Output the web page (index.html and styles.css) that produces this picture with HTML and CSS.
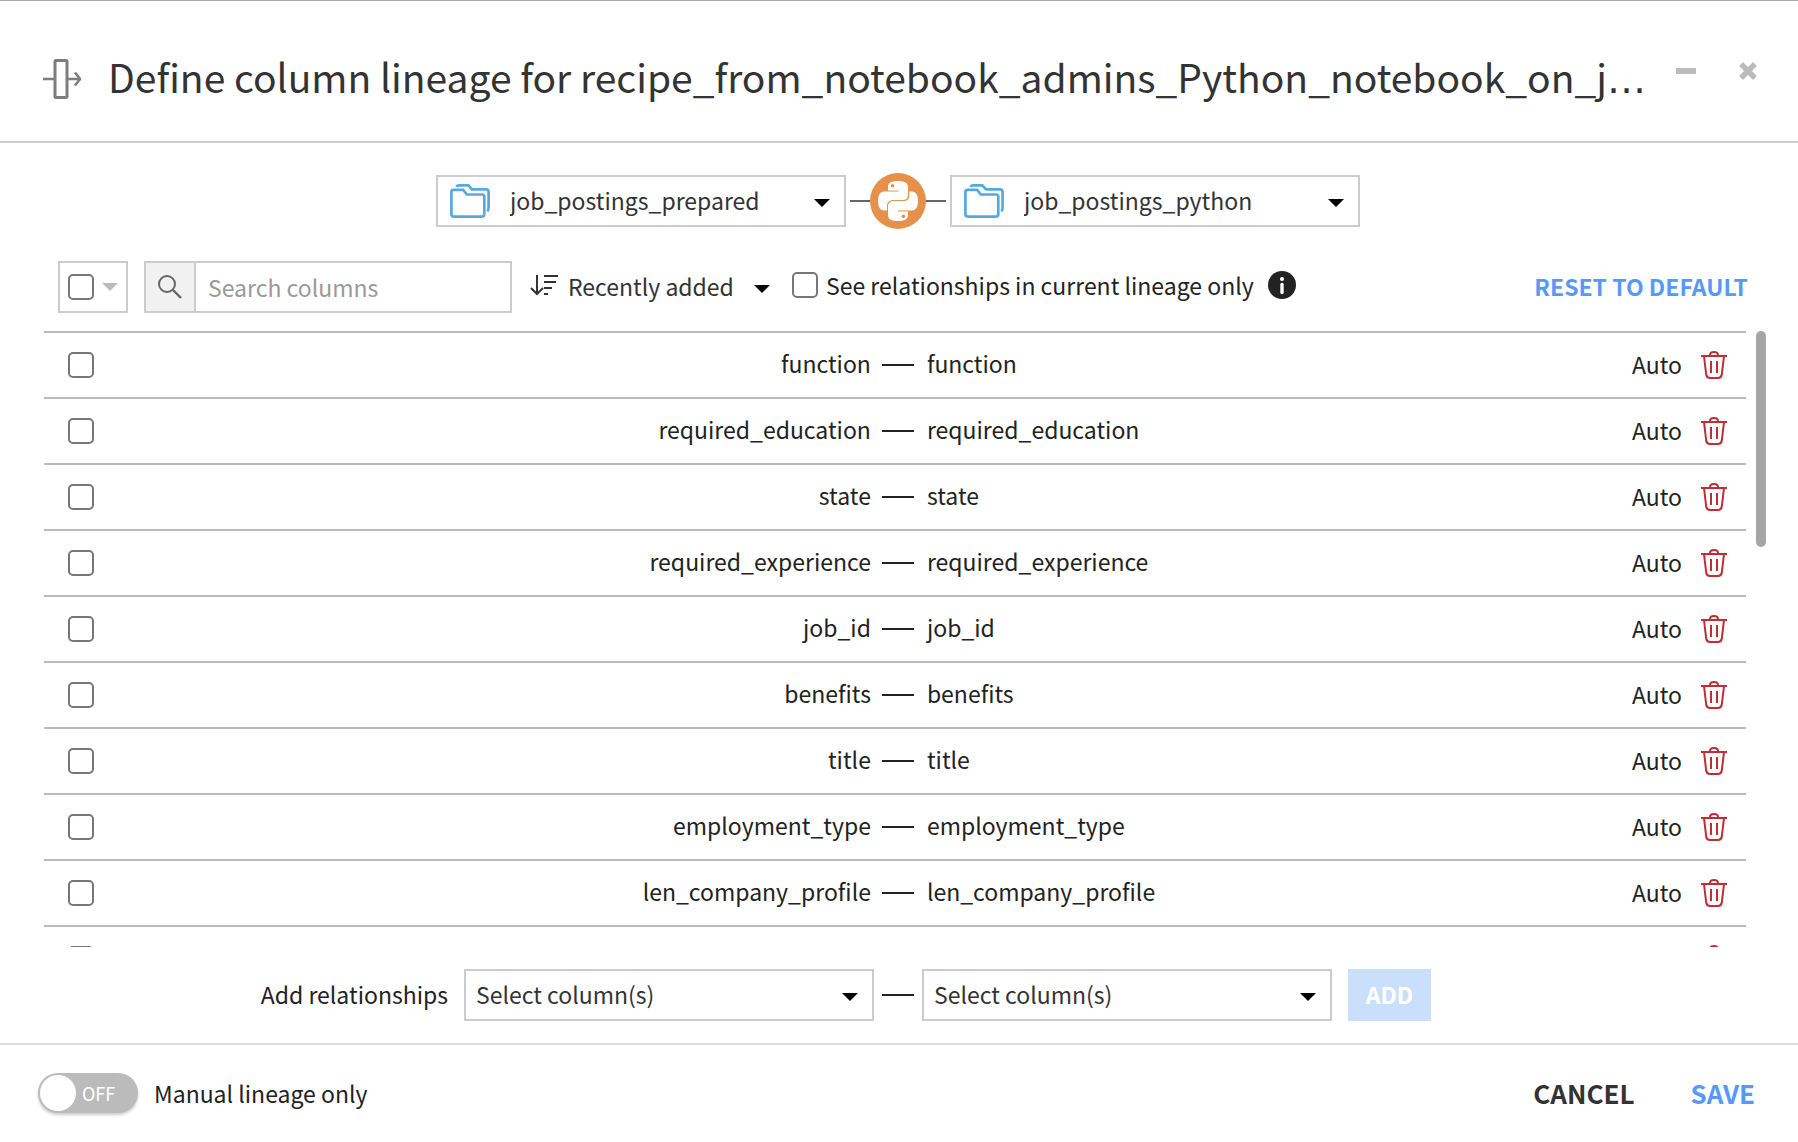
FILE: index.html
```html
<!DOCTYPE html>
<html lang="en">
<head>
<meta charset="utf-8">
<title>Define column lineage</title>
<link rel="stylesheet" href="styles.css">
</head>
<body>
<svg class="sprite" aria-hidden="true">
  <symbol id="caret" viewBox="0 0 16 8"><path d="M0 0h16L8 8z" fill="currentColor"/></symbol>
  <symbol id="folder" viewBox="0 0 40 34">
    <g fill="none" stroke="currentColor" stroke-width="2.700">
      <path d="M1.400 10V8Q1.400 5.900 3.500 5.900h9.700l3.600 4.600h15.200q2.300 0 2.300 2.300v17.300q0 2.500-2.300 2.500H3.900q-2.500 0-2.500-2.500z"/>
      <path d="M6.400 2.800Q7.200 1.400 9 1.400h9.400l3.600 4h14q2.600 0 2.600 2.600v15.800q0 2.200-1.300 3.600"/>
    </g>
  </symbol>
  <symbol id="trash" viewBox="0 0 26 28">
    <g fill="none" stroke="currentColor" stroke-width="2">
      <path d="M0 5h26M9 5V4q0-3 4-3t4 3v1M3 5l2.200 18.500Q5.700 27 9 27h8q3.300 0 3.800-3.500L23 5M10 10v12M16 10v12"/>
    </g>
  </symbol>
</svg>

<div class="dialog">
  <header class="header">
    <svg class="header-icon" viewBox="0 0 40 40" aria-hidden="true">
      <g fill="none" stroke="currentColor" stroke-width="3">
        <rect x="13" y="1.500" width="12" height="37" rx="1"/>
        <path d="M1 20h12M25 20h14" stroke-width="2.500"/>
        <path d="M33 13.500l5 6.500-5 6.500" stroke-linejoin="round" stroke-width="2.500"/>
      </g>
    </svg>
    <h1 class="title"><span class="title-text">Define column lineage for recipe_from_notebook_admins_Python_notebook_on_job_postings</span></h1>
    <div class="window-actions">
      <button class="icon-button" type="button" aria-label="Minimize">
        <svg width="20" height="20" viewBox="0 0 20 20"><path d="M0 7h20v6H0z" fill="currentColor"/></svg>
      </button>
      <button class="icon-button" type="button" aria-label="Close">
        <svg width="20" height="20" viewBox="0 0 20 20"><path d="M3 3l14 14M17 3L3 17" stroke="currentColor" stroke-width="5.500"/></svg>
      </button>
    </div>
  </header>

  <main class="main">
    <div class="datasets">
      <div class="field">
        <svg class="field-icon" width="40" height="34"><use href="#folder"/></svg>
        <select class="field-select with-icon" aria-label="Input dataset"><option>job_postings_prepared</option></select>
        <svg class="field-caret" width="16" height="8"><use href="#caret"/></svg>
      </div>
      <div class="connector">
        <svg class="python" viewBox="0 0 56 56" aria-hidden="true">
          <circle cx="28" cy="28" r="28" fill="#e6914a"/>
          <g fill="#fff">
            <path d="M27.500 8C20.500 8 18 10.500 18 14v3.500h10.500v1H14c-4 0-6 4-6 9.500s2 9.500 6 9.500h3V33c0-4 3-6 6.500-6h9.500c3 0 5-2 5-5V14c0-4-3.500-6-10.500-6z"/>
            <path d="M28.500 48C35.500 48 38 45.500 38 42v-3.500H28v-1h14c4 0 6-4 6-9.500s-2-9.500-6-9.500h-2.800v4c0 3.500-2.500 5.500-5.500 5.500h-9.700c-3.500 0-6 2-6 5.500V42c0 4 3 6 10.500 6z"/>
          </g>
          <circle cx="22.600" cy="12.800" r="1.800" fill="#e6914a"/>
          <circle cx="33.400" cy="43.200" r="1.800" fill="#e6914a"/>
        </svg>
      </div>
      <div class="field">
        <svg class="field-icon" width="40" height="34"><use href="#folder"/></svg>
        <select class="field-select with-icon" aria-label="Output dataset"><option>job_postings_python</option></select>
        <svg class="field-caret" width="16" height="8"><use href="#caret"/></svg>
      </div>
    </div>

    <div class="toolbar">
      <div class="select-all">
        <input class="checkbox" type="checkbox" aria-label="Select all">
        <svg width="16" height="8" aria-hidden="true"><use href="#caret"/></svg>
      </div>
      <div class="search">
        <label class="search-icon" for="search" aria-label="Search">
          <svg width="26" height="26" viewBox="0 0 26 26"><g fill="none" stroke="currentColor" stroke-width="2"><circle cx="10" cy="10" r="8"/><path d="M16 16l8 8" stroke-width="2.400"/></g></svg>
        </label>
        <input class="search-input" id="search" type="text" placeholder="Search columns">
      </div>
      <div class="sort">
        <svg class="sort-icon" width="28" height="22" viewBox="0 0 28 22" aria-hidden="true"><g fill="none" stroke="currentColor" stroke-width="2"><path d="M7 1v19M1 14l6 6 6-6M14 2h14M14 8h12M14 14h8M14 20h4"/></g></svg>
        <select class="sort-select" aria-label="Sort order"><option>Recently added</option></select>
        <svg class="sort-caret" width="16" height="8"><use href="#caret"/></svg>
      </div>
      <label class="only-current"><input class="checkbox" type="checkbox">See relationships in current lineage only
        <svg class="info" width="28" height="28" viewBox="0 0 28 28" aria-hidden="true"><circle cx="14" cy="14" r="14" fill="#222"/><circle cx="14" cy="8" r="2" fill="#fff"/><path d="M14 13.500v8" stroke="#fff" stroke-width="3.400" stroke-linecap="round"/></svg>
      </label>
      <button class="reset" type="button">RESET TO DEFAULT</button>
    </div>

    <div class="list">
      <div class="list-view">
        <table class="relations">
          <colgroup><col class="col-check"><col class="col-from"><col class="col-dash"><col><col class="col-mode"><col class="col-delete"></colgroup>
          <tbody id="rows"></tbody>
        </table>
      </div>
      <div class="scrollbar"><div class="thumb"></div></div>
    </div>

    <div class="add-row">
      <span class="add-label">Add relationships</span>
      <div class="add-fields">
        <div class="field">
          <select class="field-select" aria-label="Input columns"><option>Select column(s)</option></select>
          <svg class="field-caret" width="16" height="8"><use href="#caret"/></svg>
        </div>
        <span class="dash"></span>
        <div class="field">
          <select class="field-select" aria-label="Output columns"><option>Select column(s)</option></select>
          <svg class="field-caret" width="16" height="8"><use href="#caret"/></svg>
        </div>
      </div>
      <button class="add" type="button" disabled>ADD</button>
    </div>
  </main>

  <footer class="footer">
    <label class="manual">
      <input class="toggle-input" type="checkbox" role="switch">
      <span class="toggle" aria-hidden="true"><span class="knob"></span>OFF</span>
      Manual lineage only
    </label>
    <button class="text-button" type="button">CANCEL</button>
    <button class="text-button primary" type="button">SAVE</button>
  </footer>
</div>
<script src="rows.js"></script>
</body>
</html>
```
FILE: rows.js
```js
const columns = ["function", "required_education", "state", "required_experience",
  "job_id", "benefits", "title", "employment_type", "len_company_profile", ""];

document.getElementById("rows").innerHTML = columns.map(name => `
  <tr>
    <td class="cell-check"><input class="checkbox" type="checkbox" aria-label="Select row"></td>
    <td class="cell-from">${name}</td>
    <td>${name ? '<span class="dash"></span>' : ""}</td>
    <td class="cell-to">${name}</td>
    <td class="cell-mode">${name ? "Auto" : ""}</td>
    <td class="cell-delete"><button class="icon-button delete" type="button" aria-label="Delete"><svg width="26" height="28"><use href="#trash"/></svg></button></td>
  </tr>`).join("");
```
FILE: styles.css
```css
* { box-sizing: border-box; }

body {
  margin: 0;
  background: #fff;
  color: #222;
  font: 23px/32px "Noto Sans CJK KR", "Noto Sans", sans-serif;
}

button, input, select { font: inherit; color: inherit; }
button { padding: 0; border: 0; background: none; cursor: pointer; }
svg { display: block; flex: none; }
.sprite { position: absolute; width: 0; height: 0; }

.dialog {
  display: flex;
  flex-direction: column;
  height: 100vh;
  border-top: 1px solid #aaa;
}

.header {
  display: flex;
  align-items: center;
  padding: 48px 40px 32px 42px;
  border-bottom: 2px solid #ccc;
}
.header-icon { width: 40px; height: 40px; margin-right: 26px; color: #7d7d7d; }
/* The heading's own font supplies the ellipsis, with its dots on the baseline. */
.title {
  flex: 1;
  min-width: 0;
  margin: 0 0 2px;
  overflow: hidden;
  white-space: nowrap;
  text-overflow: ellipsis;
  color: #333;
  font-family: "DejaVu Sans", sans-serif;
  font-size: 39px;
  font-weight: 400;
  line-height: 54px;
}
.title-text { font-family: "Noto Sans CJK KR", "Noto Sans", sans-serif; }
.window-actions {
  display: flex;
  gap: 42px;
  margin: 0 0 16px 18px;
  color: #bbb;
}
.icon-button { display: block; color: inherit; }

.main {
  display: flex;
  flex: 1;
  flex-direction: column;
  min-height: 0;
}

.datasets {
  display: flex;
  justify-content: center;
  gap: 4px;
  padding: 32px 2px 0 0;
}
.field {
  display: grid;
  grid-template-columns: auto 1fr auto;
  align-items: center;
  width: 410px;
  height: 52px;
  border: 2px solid #ccc;
  color: #333;
}
.field > * { grid-row: 1; }
.field-icon { grid-column: 1; margin-left: 12px; color: #57a9dc; pointer-events: none; }
.field-caret { grid-column: 3; margin: 4px 14px 0 0; color: #000; pointer-events: none; }
.field-select {
  grid-column: 1 / -1;
  height: 48px;
  padding: 0 40px 2px 10px;
  appearance: none;
  border: 0;
  background: none;
}
.field-select.with-icon { padding-left: 72px; }
.connector {
  display: flex;
  align-items: center;
  width: 96px;
  height: 52px;
}
.connector::before, .connector::after { content: ""; flex: 1; height: 2px; background: #666; }
.python { width: 56px; height: 56px; }

.toolbar {
  display: flex;
  align-items: center;
  padding: 34px 50px 18px 58px;
}
.checkbox {
  flex: none;
  width: 26px;
  height: 26px;
  margin: 0;
  appearance: none;
  border: 2px solid #777;
  border-radius: 5px;
  background: #fff;
}
.select-all {
  display: flex;
  align-items: center;
  gap: 8px;
  width: 70px;
  height: 52px;
  padding-left: 8px;
  border: 2px solid #ccc;
  color: #bbb;
}
.search {
  display: flex;
  width: 368px;
  height: 52px;
  margin-left: 16px;
  border: 2px solid #ccc;
}
.search-icon {
  display: flex;
  align-items: center;
  justify-content: center;
  width: 50px;
  border-right: 2px solid #ccc;
  background: #f1f1f1;
  color: #666;
}
.search-input { flex: 1; min-width: 0; padding: 0 12px; border: 0; }
.search-input::placeholder { color: #999; }
.sort {
  display: grid;
  grid-template-columns: 28px 212px;
  align-items: center;
  gap: 10px;
  margin-left: 18px;
  color: #333;
}
.sort > * { grid-row: 1; }
.sort-icon { margin-bottom: 4px; }
.sort-select { grid-column: 2; height: 36px; padding: 0 0 2px; appearance: none; border: 0; background: none; }
.sort-caret { grid-column: 2; justify-self: end; margin: 4px 10px 0 0; color: #000; pointer-events: none; }
.only-current {
  display: flex;
  align-items: center;
  gap: 8px;
  margin: 0 auto 4px 12px;
  white-space: nowrap;
}
.info { margin-left: 6px; }
.reset { padding-bottom: 2px; color: #5899f8; font-weight: 700; white-space: nowrap; }

.list {
  display: flex;
  flex: 1;
  gap: 10px;
  min-height: 0;
  padding: 0 32px 0 44px;
}
.list-view { flex: 1; overflow: hidden; }
.scrollbar { width: 10px; }
.thumb { height: 35%; border-radius: 5px; background: #a6a6a6; }
.relations { width: 100%; table-layout: fixed; border-spacing: 0; }
.relations td { height: 66px; padding: 0; border-top: 2px solid #bbb; }
.col-check { width: 55px; }
.col-from { width: 46%; }
.col-dash { width: 32px; }
.col-mode { width: 80px; }
.col-delete { width: 64px; }
.cell-check .checkbox { display: block; margin-left: 24px; }
.relations .cell-from { padding: 0 11px 4px 0; text-align: right; }
.relations .cell-to { padding: 0 0 4px 13px; }
.relations .cell-mode { padding-bottom: 2px; text-align: right; }
.relations .cell-delete { padding-left: 19px; }
.delete { color: #be2e33; }
.dash { display: block; width: 32px; height: 2px; background: #222; }

.add-row {
  display: grid;
  grid-template-columns: 1fr auto 1fr;
  align-items: center;
  gap: 16px;
  padding: 22px 2px 22px 0;
  border-bottom: 2px solid #ddd;
}
.add-label { padding-bottom: 2px; text-align: right; }
.add-fields { display: flex; align-items: center; gap: 8px; }
.add {
  justify-self: start;
  width: 83px;
  height: 52px;
  padding-bottom: 2px;
  background: #cadffc;
  color: #fff;
  font-weight: 700;
}

.footer {
  display: flex;
  align-items: center;
  gap: 56px;
  height: 97px;
  padding: 0 43px 2px 38px;
}
.manual { display: flex; align-items: center; gap: 16px; margin-right: auto; }
.toggle-input { position: absolute; opacity: 0; }
.toggle {
  display: flex;
  align-items: center;
  gap: 6px;
  width: 100px;
  height: 40px;
  padding: 2px;
  border-radius: 20px;
  background: #bbb;
  box-shadow: 0 2px 3px #0003;
  color: #fff;
  font-size: 18px;
}
.knob { width: 36px; height: 36px; border-radius: 50%; background: #fff; }
.text-button { color: #333; font-size: 26px; font-weight: 700; }
.text-button.primary { color: #5899f8; }
```
